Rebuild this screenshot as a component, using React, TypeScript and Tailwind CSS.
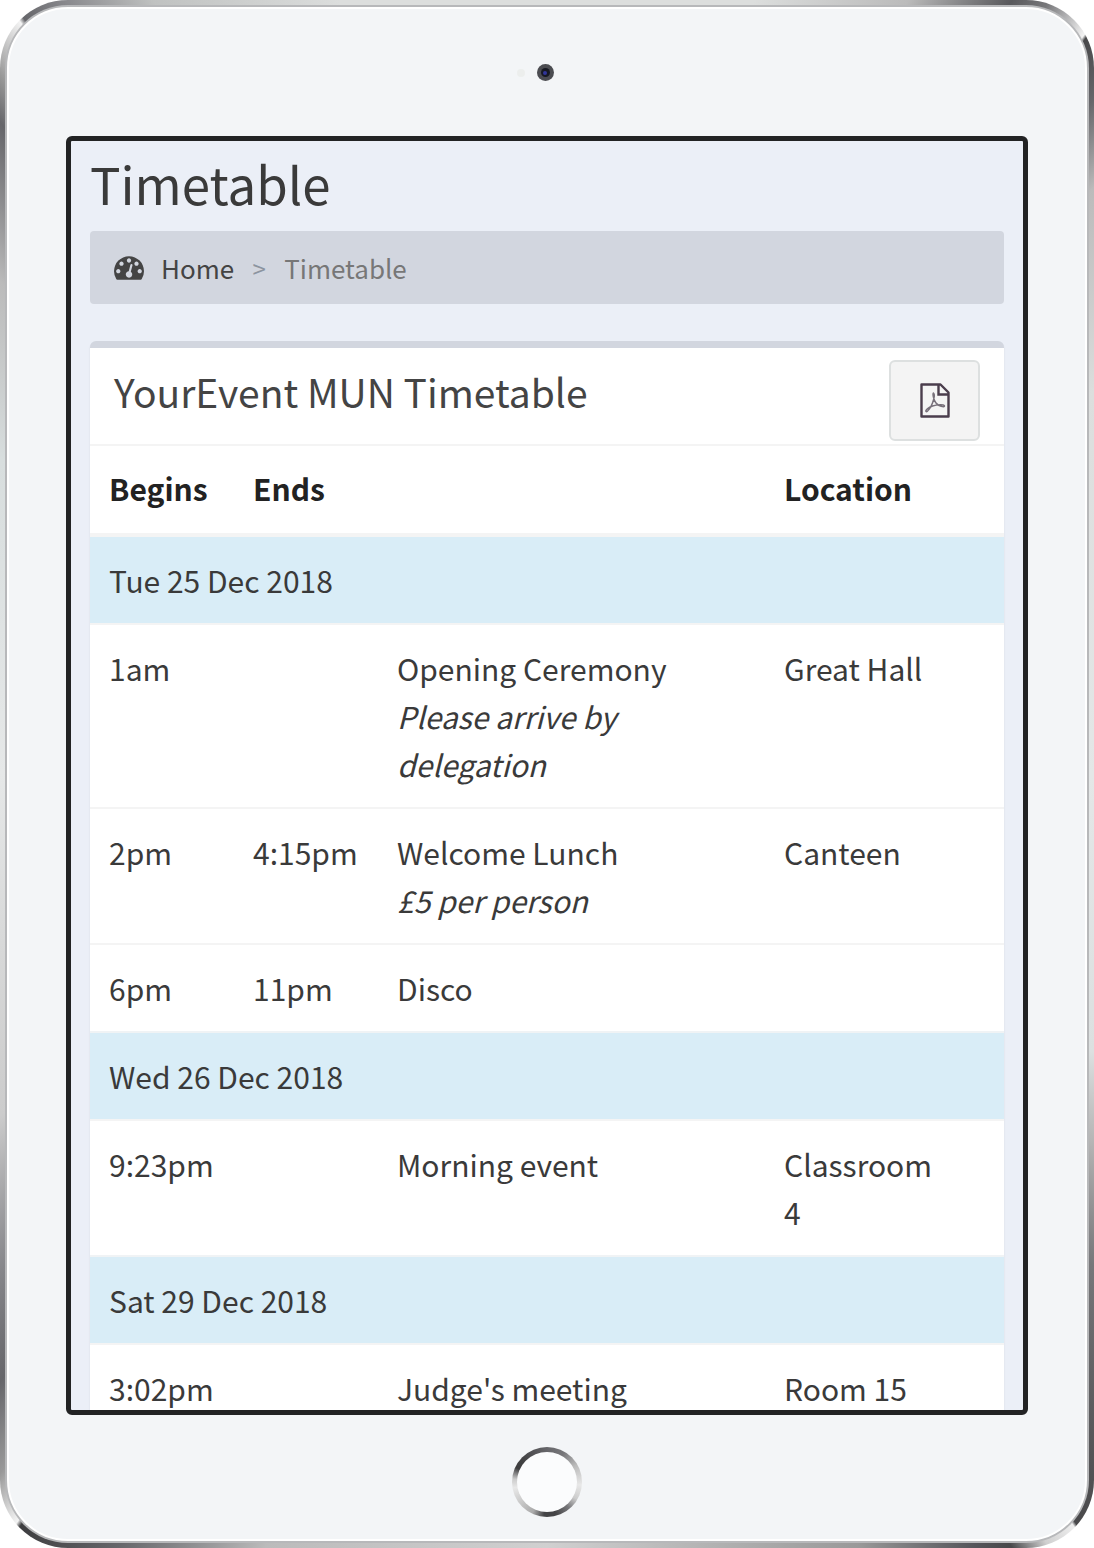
import React from 'react';

type Row =
  | { day: string }
  | { begins: string; ends?: string; title: string; note?: string; location?: string };

const rows: Row[] = [
  { day: 'Tue 25 Dec 2018' },
  { begins: '1am', title: 'Opening Ceremony', note: 'Please arrive by delegation', location: 'Great Hall' },
  { begins: '2pm', ends: '4:15pm', title: 'Welcome Lunch', note: '£5 per person', location: 'Canteen' },
  { begins: '6pm', ends: '11pm', title: 'Disco' },
  { day: 'Wed 26 Dec 2018' },
  { begins: '9:23pm', title: 'Morning event', location: 'Classroom 4' },
  { day: 'Sat 29 Dec 2018' },
  { begins: '3:02pm', title: "Judge's meeting", location: 'Room 15' },
];

function DashboardIcon() {
  return (
    <svg width="30" height="24" viewBox="0 256 1792 1408" fill="#444" className="mr-[17px] shrink-0" aria-hidden="true">
      <path d="M384 1152q0-53-37.5-90.5T256 1024t-90.5 37.5T128 1152t37.5 90.5T256 1280t90.5-37.5T384 1152zM576 704q0-53-37.5-90.5T448 576t-90.5 37.5T320 704t37.5 90.5T448 832t90.5-37.5T576 704zM1004 1185l101-382q6-26-7.5-48.5T1059 725t-48 6.5-30 39.5l-101 382q-60 5-107 43.5T710 1295q-20 77 20 146t117 89 146-20 89-117q16-60-6-117t-72-91zM1664 1152q0-53-37.5-90.5T1536 1024t-90.5 37.5T1408 1152t37.5 90.5T1536 1280t90.5-37.5T1664 1152zM1024 512q0-53-37.5-90.5T896 384t-90.5 37.5T768 512t37.5 90.5T896 640t90.5-37.5T1024 512zM1472 704q0-53-37.5-90.5T1344 576t-90.5 37.5T1216 704t37.5 90.5T1344 832t90.5-37.5T1472 704zM1792 1152q0 261-141 483-19 29-54 29H195q-35 0-54-29Q0 1414 0 1152q0-182 71-348t191-286 286-191 348-71 348 71 286 191 191 286 71 348z" />
    </svg>
  );
}

function PdfIcon() {
  return (
    <svg width="30" height="35" viewBox="0 0 30 35" fill="none" aria-hidden="true">
      <path d="M1.5 1.5H20.500L28.500 9.500V33.500H1.500Z" stroke="#4a3d4c" strokeWidth="2.4" strokeLinejoin="round" />
      <path d="M18.500 1.500V11.500H28.500" stroke="#4a3d4c" strokeWidth="2.4" />
      <path
        d="M13.500 10C12.300 10 13.500 17 16 20C18.500 23 24.500 25 24.500 23C24.500 21 17 21.500 12.500 23C8.500 24.500 5 27.500 6 28.500C7.500 29.500 11 24 12.500 20C14 16 14.800 11 13.500 10Z"
        stroke="#77707a"
        strokeWidth="1.5"
      />
    </svg>
  );
}

function Timetable() {
  return (
    <table className="w-full table-fixed border-collapse text-left text-[30px] leading-[48px]">
      <colgroup>
        <col className="w-[144px]" />
        <col className="w-[144px]" />
        <col />
        <col className="w-[239px]" />
      </colgroup>
      <thead>
        <tr className="border-b-4 border-[#f4f4f4] text-[#222]">
          <th scope="col" className="px-[19px] pb-[21px] pt-[18px] font-bold">Begins</th>
          <th scope="col" className="px-[19px] pb-[21px] pt-[18px] font-bold">Ends</th>
          <td />
          <th scope="col" className="px-[19px] pb-[21px] pt-[18px] font-bold">Location</th>
        </tr>
      </thead>
      <tbody>
        {rows.map((row, i) =>
          'day' in row ? (
            <tr key={i} className="border-t-2 border-[#f0f3f5] bg-[#d9edf7]">
              <td colSpan={4} className="p-[19px]">{row.day}</td>
            </tr>
          ) : (
            <tr key={i} className="border-t-2 border-[#f4f4f4] align-top">
              <td className="py-[19px] pl-[19px]">{row.begins}</td>
              <td className="py-[19px] pl-[19px]">{row.ends}</td>
              <td className="py-[19px] pl-[19px] pr-20">
                {row.title}
                {row.note && <em className="block">{row.note}</em>}
              </td>
              <td className="py-[19px] pl-[19px] pr-16">{row.location}</td>
            </tr>
          ),
        )}
      </tbody>
    </table>
  );
}

export default function App() {
  return (
    <div className="h-screen bg-white font-['Noto_Sans_CJK_SC','Noto_Sans',sans-serif] text-[#3a3a3a]">
      <div className="h-full rounded-[68px] bg-[conic-gradient(#dcdedd_0deg,#dcdedd_15deg,#bbb_25deg,#59595c_31deg,#77777a_33deg,#f4f4f4_36deg,#48484a_36.2deg,#66666a_39deg,#bbb_43deg,#dcdedd_55deg,#e4e7e7_90deg,#dce0e0_117deg,#b5b5b5_124deg,#77777a_132deg,#48484a_144.800deg,#eee_145deg,#d0d0d0_147deg,#48484a_149deg,#55555a_151deg,#999_158deg,#d0d0d0_180deg,#bbb_200deg,#66666a_209deg,#3c3c3e_215deg,#f4f4f4_215.300deg,#999_218deg,#66666a_222deg,#88888c_228deg,#ccc_238deg,#e6e8e8_270deg,#d8dede_300deg,#bbb_312deg,#66666a_320deg,#999_322deg,#f4f4f4_325deg,#66666a_325.300deg,#88888c_328deg,#c0c2c1_333deg,#dcdedd_345deg,#dcdedd_360deg)] p-[5px]">
        <div className="h-full rounded-[63px] bg-[#b7b8ba] p-[2px]">
          <div className="flex h-full flex-col rounded-[61px] border-2 border-white bg-[#f3f5f7] px-[57px]">
            <div className="flex h-[127px] shrink-0 items-center justify-center gap-3 pr-6">
              <span className="size-2 rounded-full bg-[#eceeed]" />
              <span className="flex size-[17px] items-center justify-center rounded-full bg-[#4b4c51]">
                <span className="flex size-[9px] items-center justify-center rounded-full bg-[#171923]">
                  <span className="size-1 rounded-full bg-[#31369a]" />
                </span>
              </span>
            </div>

            <main className="min-h-0 flex-1 overflow-hidden rounded-md border-[5px] border-[#222324] bg-[#ebeff7] px-[19px] pt-3">
              <h1 className="text-[51px] leading-[60px]">Timetable</h1>
              <nav aria-label="Breadcrumb" className="mt-[18px] flex h-[73px] items-center rounded-[4px] bg-[#d2d6df] px-6 text-[26px]">
                <DashboardIcon />
                <a href="#home" className="text-[#444]">Home</a>
                <span className="mx-[17px] w-4 text-center text-2xl text-[#8c94a0]" aria-hidden="true">&gt;</span>
                <span className="text-[#777]">Timetable</span>
              </nav>

              <section className="mt-[37px] rounded-t-[6px] border-t-[7px] border-[#d2d6df] bg-white shadow-[0_2px_2px_rgba(0,0,0,0.1)]">
                <header className="flex h-[98px] items-start justify-between border-b-2 border-[#f4f4f4] px-6 pt-3">
                  <h2 className="pt-1.5 text-[39px] leading-[50px] text-[#444]">YourEvent MUN Timetable</h2>
                  <button
                    type="button"
                    aria-label="Download PDF"
                    className="flex h-[81px] w-[91px] items-center justify-center rounded-[6px] border-2 border-[#dde0e0] bg-[#f4f4f4]"
                  >
                    <PdfIcon />
                  </button>
                </header>
                <Timetable />
              </section>
            </main>

            <div className="flex h-[124px] shrink-0 items-center justify-center pt-2.5">
              <button
                type="button"
                aria-label="Home button"
                className="size-[70px] rounded-full bg-[conic-gradient(#66666a,#77777a_30deg,#bbb_60deg,#e8e8e8_95deg,#ccc_120deg,#77777a_140deg,#444446_165deg,#444446_185deg,#aaa_205deg,#e8e8e8_260deg,#ccc_275deg,#3c3c3e_295deg,#444446_315deg,#66666a_360deg)] p-[5px]"
              >
                <span className="block size-full rounded-full bg-[#fbfcfd]" />
              </button>
            </div>
          </div>
        </div>
      </div>
    </div>
  );
}
